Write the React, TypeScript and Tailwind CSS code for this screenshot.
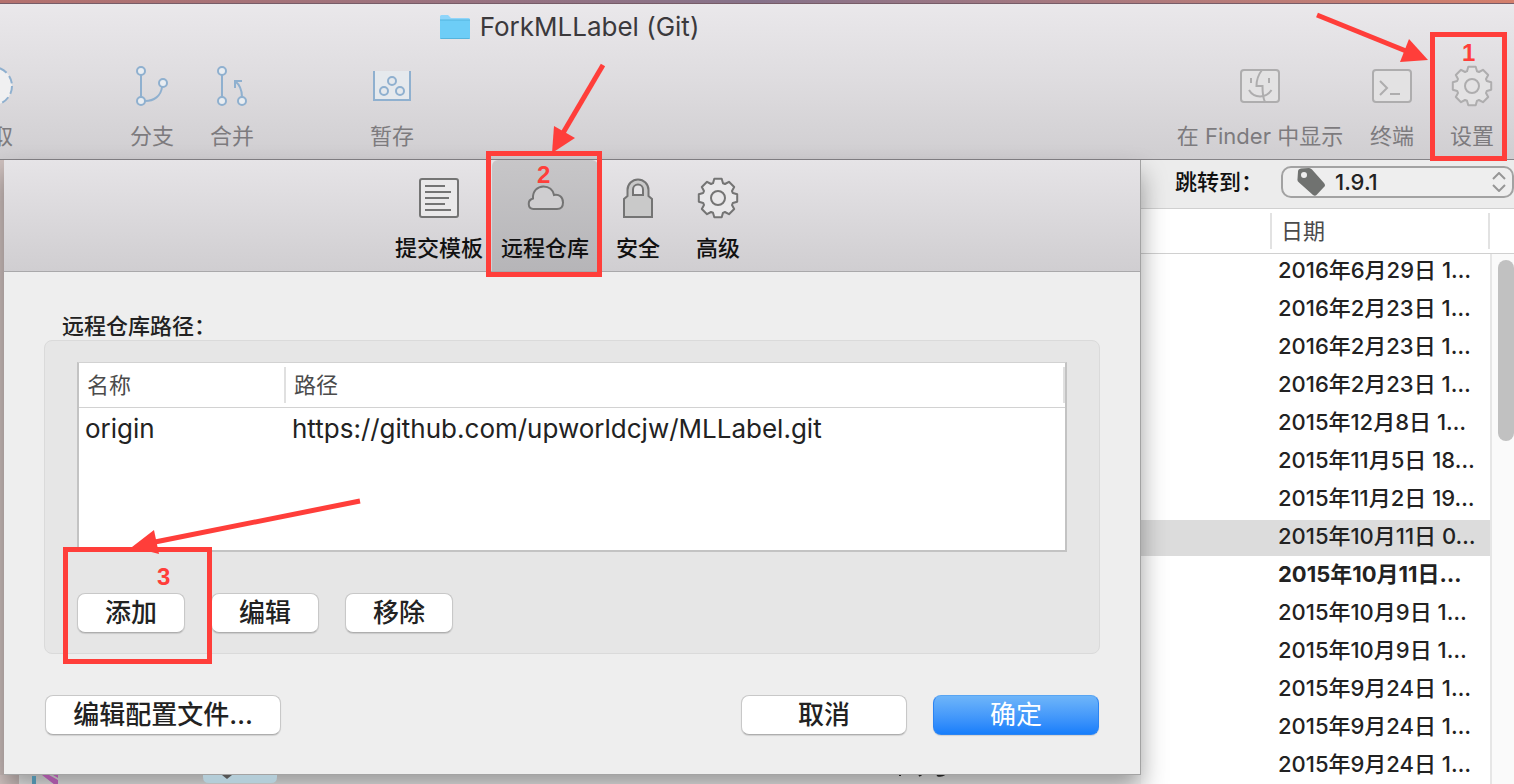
import type { ReactNode } from "react";

const GEAR_PATH = (() => {
  const points: string[] = [];
  const at = (x: number, y: number, a: number) =>
    `${(20 + x * Math.cos(a) - y * Math.sin(a)).toFixed(2)} ${(20 + x * Math.sin(a) + y * Math.cos(a)).toFixed(2)}`;
  for (let i = 0; i < 8; i++) {
    const a = (i * Math.PI) / 4;
    points.push(`${i ? "L" : "M"}${at(-3.7, -19.2, a)}L${at(3.7, -19.2, a)}L${at(5, -14.8, a)}L${at(7, -14, a)}`);
  }
  return `${points.join("")}Z`;
})();

function Icon({ children, className }: { children: ReactNode; className: string }) {
  return (
    <svg viewBox="0 0 40 40" className={`size-10 shrink-0 overflow-visible ${className}`} fill="none" stroke="currentColor" strokeWidth="2" aria-hidden="true">
      {children}
    </svg>
  );
}

const BLUE = "text-[#8fb0cf]";
const PALE = "text-[#aeadae]";
const DARK = "text-[#747474]";

const FetchIcon = () => (
  <Icon className={BLUE}>
    <circle cx="20" cy="20" r="19" fill="#f0f0f1" strokeDasharray="8 4" />
  </Icon>
);
const BranchIcon = () => (
  <Icon className={BLUE}>
    <path d="M9 9V31M13 35C22 35 29 30 30 21" />
    <g fill="#e9edf1">
      <circle cx="9" cy="5" r="4" />
      <circle cx="9" cy="35" r="4" />
      <circle cx="31" cy="17" r="4" />
    </g>
  </Icon>
);
const MergeIcon = () => (
  <Icon className={BLUE}>
    <path d="M10 9V31M30 31C30 24 28 19 23 15M23 22V15H30" />
    <g fill="#e9edf1">
      <circle cx="10" cy="5" r="4" />
      <circle cx="10" cy="35" r="4" />
      <circle cx="30" cy="35" r="4" />
    </g>
  </Icon>
);
const StashIcon = () => (
  <Icon className={BLUE}>
    <path d="M2 5V34H38V5" fill="#e5e9ed" />
    <circle cx="20" cy="15" r="4" />
    <circle cx="12" cy="25" r="4" />
    <circle cx="28" cy="25" r="4" />
  </Icon>
);
const FinderIcon = () => (
  <Icon className={PALE}>
    <rect x="1" y="4" width="38" height="32" rx="3" fill="#e3e2e3" />
    <path d="M11 12V17M29 12V17M22 4C18 9 16.500 15 16.500 20H22.500C22.500 27 23 32 25 36M9 24C14 32.500 26 32.500 31.500 24" />
  </Icon>
);
const TerminalIcon = () => (
  <Icon className={PALE}>
    <rect x="1" y="4" width="38" height="32" rx="3" fill="#e3e2e3" />
    <path d="M8 15L15 22L8 29M18 28H28" />
  </Icon>
);
const GearIcon = ({ className, fill }: { className: string; fill: string }) => (
  <Icon className={className}>
    <path d={GEAR_PATH} fill={fill} strokeLinejoin="round" />
    <circle cx="20" cy="20" r="7" />
  </Icon>
);
const TemplateIcon = () => (
  <Icon className={DARK}>
    <rect x="1" y="1" width="38" height="38" rx="2" fill="#eae9ea" />
    <path d="M6 8H26M6 14H32M6 20H30M6 26H26M6 32H32" />
  </Icon>
);
const CloudIcon = () => (
  <Icon className={DARK}>
    <path d="M8.500 31C2.500 31 2 22 8 20.500C7.500 13 12.500 8.500 18.500 8.500C24 8.500 28 12 29 17C34 16 38 19 38 24.500C38 29 35.500 31 32 31Z" fill="#cfced0" />
  </Icon>
);
const LockIcon = () => (
  <Icon className={DARK}>
    <path d="M6 39V21L9.500 18V12A10.500 10.500 0 0 1 30.500 12V18L34 21V39Z" fill="#c9c9c9" />
    <path d="M15 17V11.500A5 5 0 0 1 25 11.500V17Z" fill="#e4e3e5" />
  </Icon>
);

function ToolbarButton({ icon, label, className = "w-20", children }: { icon: ReactNode; label: string; className?: string; children?: ReactNode }) {
  return (
    <div className={`relative flex shrink-0 ${className}`}>
      <button type="button" className="flex w-full flex-col items-center gap-[18px]">
        {icon}
        <span className="text-[22px] leading-6 whitespace-nowrap text-[#7d7b7e]">{label}</span>
      </button>
      {children}
    </div>
  );
}

function Callout({ className, step, stepClass, arrow }: { className: string; step: string; stepClass: string; arrow: ReactNode }) {
  return (
    <div className={`pointer-events-none absolute z-20 border-[5px] border-[#ff3e3a] ${className}`}>
      <span className={`absolute font-['Liberation_Sans',sans-serif] text-2xl leading-6 font-bold text-[#ff3e3a] ${stepClass}`}>{step}</span>
      <svg width="10" height="10" className="absolute -top-[5px] -left-[5px] overflow-visible" fill="#ff3e3a" stroke="#ff3e3a" aria-hidden="true">
        {arrow}
      </svg>
    </div>
  );
}

function SheetTab({ icon, label, className, children }: { icon: ReactNode; label: string; className: string; children?: ReactNode }) {
  return (
    <div className={`relative flex shrink-0 ${className}`}>
      <button type="button" className="flex w-full flex-col items-center gap-[18px] pt-[18px] pb-[11px]">
        {icon}
        <span className="text-[22px] leading-6 font-medium whitespace-nowrap text-[#111]">{label}</span>
      </button>
      {children}
    </div>
  );
}

function PushButton({ label, className, primary = false }: { label: string; className: string; primary?: boolean }) {
  const look = primary
    ? "border-[#2b84f3] border-t-[#58a5f3] bg-linear-to-b from-[#6eb5f9] to-[#167efb] text-white"
    : "border-[#c8c8c8] border-b-[#aeaeae] bg-white font-medium text-[#222]";
  return (
    <button type="button" className={`h-10 rounded-lg border text-[26px] leading-9 whitespace-nowrap shadow-[0_1px_1px_rgba(0,0,0,0.12)] ${look} ${className}`}>
      {label}
    </button>
  );
}

const commits = [
  { date: "2016年6月29日 1…" },
  { date: "2016年2月23日 1…" },
  { date: "2016年2月23日 1…" },
  { date: "2016年2月23日 1…" },
  { date: "2015年12月8日 1…" },
  { date: "2015年11月5日 18…" },
  { date: "2015年11月2日 19…" },
  { date: "2015年10月11日 0…", selected: true },
  { date: "2015年10月11日…", bold: true },
  { date: "2015年10月9日 1…" },
  { date: "2015年10月9日 1…" },
  { date: "2015年9月24日 1…" },
  { date: "2015年9月24日 1…" },
  { date: "2015年9月24日 1…" },
];

function WindowHeader() {
  return (
    <header className="border-b border-[#858387] bg-linear-to-b from-[#eae8eb] via-[#dedcdf] to-[#d0ced1]">
      <div className="flex h-[46px] items-center justify-center gap-[9px] pr-[376px]">
        <svg viewBox="0 0 32 26" className="h-[26px] w-8" aria-hidden="true">
          <path d="M1 2.500Q1 1 2.500 1H9L12 4H29.500Q31 4 31 5.500V23.500Q31 25 29.500 25H2.500Q1 25 1 23.500Z" fill="#8fd5fa" />
          <path d="M1 6H31V23.500Q31 25 29.500 25H2.500Q1 25 1 23.500Z" fill="#6dcdf7" />
          <path d="M1 6H31M1.500 24.500H30.500" stroke="#55b4dd" strokeWidth="1" />
        </svg>
        <h1 className="text-[26px] leading-8 whitespace-nowrap text-[#3b393c]">ForkMLLabel (Git)</h1>
      </div>
      <div className="flex justify-between pt-4 pr-[2px] pb-[11px]">
        <div className="flex">
          <div className="flex w-[13px] justify-end overflow-hidden">
            <ToolbarButton icon={<FetchIcon />} label="取" className="w-10 justify-end text-right [&_button]:items-end" />
          </div>
          <ToolbarButton icon={<BranchIcon />} label="分支" className="ml-[99px] w-20" />
          <ToolbarButton icon={<MergeIcon />} label="合并" />
          <ToolbarButton icon={<StashIcon />} label="暂存" className="ml-20 w-20" />
        </div>
        <div className="flex">
          <ToolbarButton icon={<FinderIcon />} label="在 Finder 中显示" className="mr-2 w-[168px]" />
          <ToolbarButton icon={<TerminalIcon />} label="终端" />
          <ToolbarButton icon={<GearIcon className={PALE} fill="#e3e2e3" />} label="设置">
            <Callout
              className="-top-[34px] right-[5px] -bottom-[13px] -left-[2px]"
              step="1"
              stepClass="top-1 left-[27px]"
              arrow={
                <>
                  <path d="M-113 -17L-24 19" strokeWidth="5" />
                  <path d="M-2 28L-21 7L-30 30Z" stroke="none" />
                </>
              }
            />
          </ToolbarButton>
        </div>
      </div>
    </header>
  );
}

function SettingsSheet() {
  return (
    <section role="dialog" aria-label="远程仓库" className="relative border-r border-b border-[#a3a3a3] bg-[#eeeeee] shadow-[0_14px_24px_rgba(0,0,0,0.38)]">
      <div className="flex justify-center border-b border-[#a9a8aa] bg-linear-to-b from-[#e6e4e7] to-[#d0ced1]">
        <SheetTab icon={<TemplateIcon />} label="提交模板" className="w-[106px]" />
        <SheetTab icon={<CloudIcon />} label="远程仓库" className="w-[106px] rounded-t-md bg-linear-to-b from-[#c7c6c8] to-[#b6b5b8]">
          <Callout
            className="-top-[9px] -right-1 -bottom-[6px] -left-[6px]"
            step="2"
            stepClass="top-[7px] left-[46px]"
            arrow={
              <>
                <path d="M117 -86L77 -18" strokeWidth="5" />
                <path d="M66 2L68 -25L89 -13Z" stroke="none" />
              </>
            }
          />
        </SheetTab>
        <SheetTab icon={<LockIcon />} label="安全" className="w-20" />
        <SheetTab icon={<GearIcon className={DARK} fill="#e9e8ea" />} label="高级" className="w-20" />
      </div>

      <div className="px-10 pt-[42px] pb-[39px]">
        <h2 className="pl-[18px] text-[22px] leading-6 font-medium text-[#222]">远程仓库路径：</h2>
        <div className="mt-[2px] rounded-lg border border-[#dadada] bg-[#e6e6e6] px-8 pt-[21px] pb-5">
          <div className="min-h-[190px] border-x-2 border-t border-b-2 border-[#c3c3c3] border-t-[#d2d2d2] bg-white">
            <table className="w-full table-fixed text-left">
              <thead>
                <tr className="h-11 border-b border-[#d2d2d2] text-[22px] leading-9 text-[#4b4b4b]">
                  <th className="w-[205px] pl-2 font-normal">名称</th>
                  <th className="font-normal">
                    <div className="border-x-2 border-[#e0e0e0] pl-2">路径</div>
                  </th>
                </tr>
              </thead>
              <tbody>
                <tr className="h-11 text-[26px] leading-8 text-[#222]">
                  <td className="pl-[6px]">origin</td>
                  <td className="pl-2">https://github.com/upworldcjw/MLLabel.git</td>
                </tr>
              </tbody>
            </table>
          </div>
          <div className="mt-[41px] flex gap-[26px]">
            <div className="relative flex">
              <PushButton label="添加" className="w-[108px]" />
              <Callout
                className="-top-[46px] -right-[27px] -bottom-[31px] -left-[14px]"
                step="3"
                stepClass="top-[13px] left-[89px]"
                arrow={
                  <>
                    <path d="M297 -46L92 -5" strokeWidth="5" />
                    <path d="M69 0L91 -17L96 7Z" stroke="none" />
                  </>
                }
              />
            </div>
            <PushButton label="编辑" className="w-[108px]" />
            <PushButton label="移除" className="w-[108px]" />
          </div>
        </div>
        <div className="mt-[41px] flex gap-[26px] px-px">
          <PushButton label="编辑配置文件…" className="mr-auto w-[236px]" />
          <PushButton label="取消" className="w-[166px]" />
          <PushButton label="确定" primary className="w-[166px]" />
        </div>
      </div>
    </section>
  );
}

function HistoryPanel() {
  return (
    <aside className="flex w-[373px] shrink-0 flex-col bg-white">
      <div className="flex h-[49px] shrink-0 items-center border-b border-[#d0d0d0] bg-[#ececec] pb-1 pl-[34px]">
        <label htmlFor="jump" className="w-[106px] shrink-0 text-[22px] leading-6 font-medium whitespace-nowrap text-[#111]">
          跳转到：
        </label>
        <div className="relative flex grow items-center">
          <select id="jump" className="h-8 w-full appearance-none rounded-[10px] border-2 border-[#a2a2a2] bg-[#eeeeee] pl-[52px] text-[22px] leading-7 font-medium text-[#222]">
            <option>1.9.1</option>
          </select>
          <svg viewBox="0 0 28 28" className="pointer-events-none absolute left-4 size-7" aria-hidden="true">
            <path d="M1 3.500Q1 1 4 .5L12 0Q13.500 0 15 1.500L27 15Q29 17.500 27 19L19.500 27Q18 28.500 16 27L2 14.500Q0 13 .5 11ZM7 4A3 3 0 1 0 7 10A3 3 0 1 0 7 4Z" fill="#707270" fillRule="evenodd" />
          </svg>
          <svg viewBox="0 0 14 20" className="pointer-events-none absolute right-2 h-5 w-[14px]" fill="none" stroke="#969696" strokeWidth="2" aria-hidden="true">
            <path d="M1 7L7 1L13 7M1 13L7 19L13 13" />
          </svg>
        </div>
      </div>
      <div className="flex h-[45px] shrink-0 items-center border-b border-[#d0d0d0] pl-[129px] text-[22px] leading-9 text-[#4b4b4b]">
        <span id="date-heading" className="mr-6 grow border-x-2 border-[#e2e2e2] pl-[9px]">日期</span>
      </div>
      <div className="flex grow">
        <table className="w-full border-separate border-spacing-0" aria-labelledby="date-heading">
          <tbody>
            {commits.map((c, i) => (
              <tr key={i} className="text-[22px] leading-8 text-[#222]">
                <td className="h-[38px] p-0 align-top">
                  <div className={`h-9 pl-[137px] whitespace-nowrap ${c.selected ? "bg-[#dcdcdc]" : ""} ${c.bold ? "font-bold" : "font-medium"}`}>{c.date}</div>
                </td>
              </tr>
            ))}
          </tbody>
        </table>
        <div className="w-6 shrink-0 border-l-2 border-[#e6e6e6] bg-[#fafafa] pt-[6px] pl-[6px]">
          <div className="h-[181px] w-4 rounded-full bg-[#c1c1c1]" />
        </div>
      </div>
    </aside>
  );
}

export default function App() {
  return (
    <div className="flex h-screen flex-col overflow-hidden bg-[#d8c9c7] font-['Inter','Noto_Sans_CJK_SC',sans-serif]">
      <div className="h-1 shrink-0 border-b border-[#775c68] bg-linear-to-r from-[#b5716e] via-[#86728a] to-[#d47f6c]" />
      <WindowHeader />
      <div className="flex min-h-0 grow">
        <main className="flex min-w-0 grow flex-col">
          <div className="relative z-10 border-l-4 border-[#cdbfbd]">
            <SettingsSheet />
          </div>
          <div className="flex h-[10px] shrink-0 pl-[19px]">
            <div className="flex min-w-0 grow bg-[#fafafa]">
              <svg viewBox="0 0 940 10" width="940" height="10" className="relative z-10 shrink-0" aria-hidden="true">
                <path d="M13 1H17V10H13Z" fill="#4e8ba5" />
                <path d="M23 0H30L39 5V10H36ZM34 0H39V3Z" fill="#a355a0" />
                <path d="M184 0H258V2Q258 8 252 8H190Q184 8 184 2Z" fill="#b4cdd8" />
                <path d="M203 0H213L208 4Z" fill="#555" />
                <path d="M881 0V1M900 1L903 -1M918 0Q922 2 926 -1" stroke="#222" strokeWidth="2" fill="none" />
              </svg>
            </div>
          </div>
        </main>
        <HistoryPanel />
      </div>
    </div>
  );
}
